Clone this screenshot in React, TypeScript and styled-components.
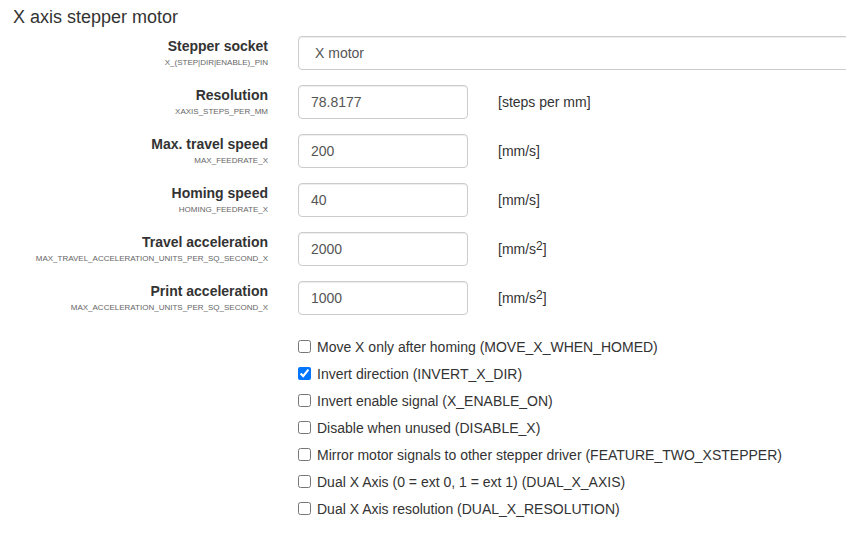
import React from "react";
import styled, { createGlobalStyle } from "styled-components";

const Global = createGlobalStyle`
  html, body { margin: 0; padding: 0; background: #fff; overflow: hidden; }
  body { font-family: "Liberation Sans", Arial, sans-serif; color: #333; }
`;

const Page = styled.div`
  padding: 7px 0 0 13px;
  width: 846px;
  box-sizing: border-box;
  overflow: hidden;
`;

const Title = styled.h3`
  margin: 0 0 9px 0;
  font-size: 18px;
  line-height: 20px;
  font-weight: 400;
  color: #333;
`;

const Form = styled.div`
  display: flex;
  flex-direction: column;
  gap: 15px;
  margin-left: -13px;
`;

const Row = styled.div`
  display: grid;
  grid-template-columns: 268px 1fr;
  column-gap: 30px;
  align-items: start;
`;

const LabelBox = styled.div`
  text-align: right;
  padding-top: 2px;
`;

const LabelMain = styled.div`
  font-size: 14px;
  line-height: 17px;
  font-weight: 700;
  color: #333;
`;

const LabelSub = styled.div`
  margin-top: 3px;
  font-size: 8px;
  line-height: 10px;
  color: #666;
`;

const Control = styled.div`
  display: flex;
  align-items: center;
  gap: 30px;
  height: 34px;
  min-width: 0;
`;

const TextInput = styled.div<{ $wide?: boolean }>`
  box-sizing: border-box;
  height: 34px;
  width: ${(p) => (p.$wide ? "560px" : "170px")};
  flex-shrink: 0;
  border: 1px solid #ccc;
  border-radius: 4px;
  padding: 0 ${(p) => (p.$wide ? "16px" : "12px")};
  display: flex;
  align-items: center;
  font-size: 14px;
  color: #555;
  background: #fff;
  box-shadow: inset 0 1px 1px rgba(0, 0, 0, 0.075);
`;

const Unit = styled.span`
  font-size: 14px;
  color: #333;
  sup {
    font-size: 12px;
    line-height: 0;
    vertical-align: baseline;
    position: relative;
    top: -4px;
  }
`;

const Checks = styled.div`
  margin: 18px 0 0 285px;
  display: flex;
  flex-direction: column;
`;

const CheckRow = styled.label`
  display: flex;
  align-items: center;
  height: 27px;
  gap: 6px;
  font-size: 14px;
  color: #333;
  input {
    margin: 0;
    width: 13px;
    height: 13px;
    accent-color: #0075ff;
  }
`;

type Field = { label: string; sub: string; value: string; unit?: React.ReactNode; wide?: boolean };

const fields: Field[] = [
  { label: "Stepper socket", sub: "X_(STEP|DIR|ENABLE)_PIN", value: "X motor", wide: true },
  { label: "Resolution", sub: "XAXIS_STEPS_PER_MM", value: "78.8177", unit: "[steps per mm]" },
  { label: "Max. travel speed", sub: "MAX_FEEDRATE_X", value: "200", unit: "[mm/s]" },
  { label: "Homing speed", sub: "HOMING_FEEDRATE_X", value: "40", unit: "[mm/s]" },
  {
    label: "Travel acceleration",
    sub: "MAX_TRAVEL_ACCELERATION_UNITS_PER_SQ_SECOND_X",
    value: "2000",
    unit: (
      <>
        [mm/s<sup>2</sup>]
      </>
    ),
  },
  {
    label: "Print acceleration",
    sub: "MAX_ACCELERATION_UNITS_PER_SQ_SECOND_X",
    value: "1000",
    unit: (
      <>
        [mm/s<sup>2</sup>]
      </>
    ),
  },
];

const checks: { text: string; checked?: boolean }[] = [
  { text: "Move X only after homing (MOVE_X_WHEN_HOMED)" },
  { text: "Invert direction (INVERT_X_DIR)", checked: true },
  { text: "Invert enable signal (X_ENABLE_ON)" },
  { text: "Disable when unused (DISABLE_X)" },
  { text: "Mirror motor signals to other stepper driver (FEATURE_TWO_XSTEPPER)" },
  { text: "Dual X Axis (0 = ext 0, 1 = ext 1) (DUAL_X_AXIS)" },
  { text: "Dual X Axis resolution (DUAL_X_RESOLUTION)" },
];

export default function App() {
  return (
    <Page>
      <Global />
      <Title>X axis stepper motor</Title>
      <Form>
        {fields.map((f) => (
          <Row key={f.label}>
            <LabelBox>
              <LabelMain>{f.label}</LabelMain>
              <LabelSub>{f.sub}</LabelSub>
            </LabelBox>
            <Control>
              <TextInput $wide={f.wide}>{f.value}</TextInput>
              {f.unit && <Unit>{f.unit}</Unit>}
            </Control>
          </Row>
        ))}
      </Form>
      <Checks>
        {checks.map((c) => (
          <CheckRow key={c.text}>
            <input type="checkbox" defaultChecked={c.checked} />
            <span>{c.text}</span>
          </CheckRow>
        ))}
      </Checks>
    </Page>
  );
}
